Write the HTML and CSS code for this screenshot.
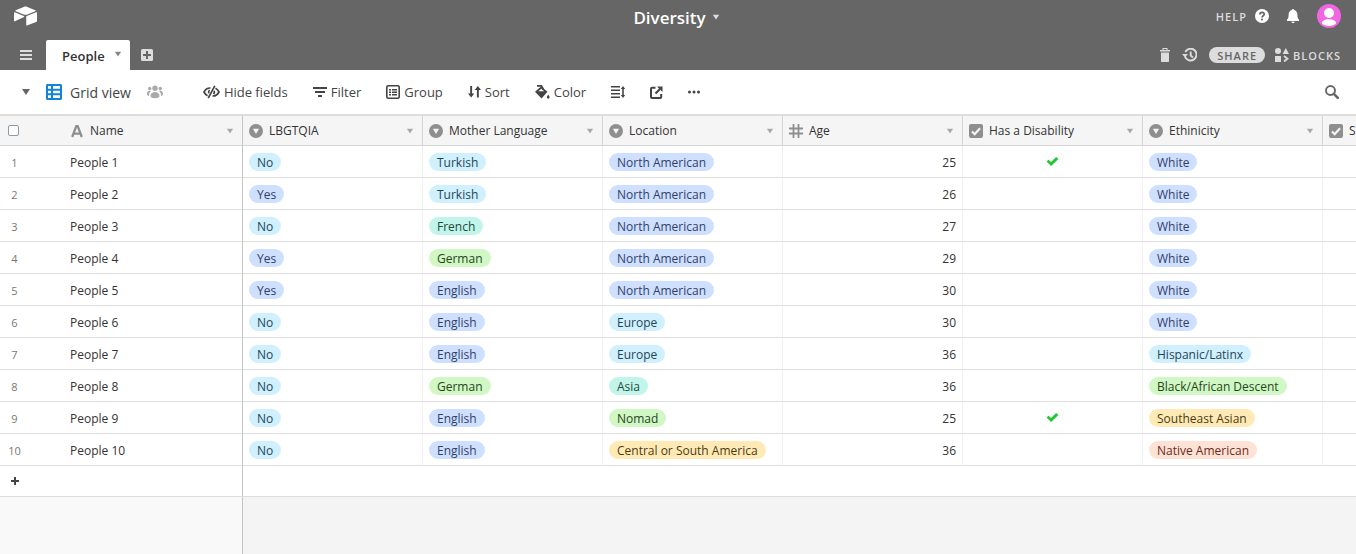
FILE: index.html
```
<!DOCTYPE html>
<html lang="en">
<head>
<meta charset="utf-8">
<title>Diversity: People</title>
<link rel="stylesheet" href="styles.css">
</head>
<body>
<svg class="sprite" aria-hidden="true">
  <symbol id="caret" viewBox="0 0 8 6"><path d="M.800.800h6.400L4 5.600z"/></symbol>
  <symbol id="select" viewBox="0 0 14 14"><path fill-rule="evenodd" d="M7 0a7 7 0 1 0 0 14A7 7 0 0 0 7 0zM3.900 4.800h6.200L7 10z"/></symbol>
  <symbol id="check" viewBox="0 0 14 14"><rect width="14" height="14" rx="2"/><path d="M3 7.500l2.700 2.700L11 4.300" fill="none" stroke="#f5f5f5" stroke-width="2.200"/></symbol>
  <symbol id="text" viewBox="0 0 14 14"><path d="M2.200 13L6.300 2.200h1.400L11.800 13M3.600 9.600h6.800" fill="none" stroke="currentColor" stroke-width="2.300"/></symbol>
  <symbol id="number" viewBox="0 0 14 14"><path d="M4.500 0v14M9.500 0v14M0 4.500h14M0 9.500h14" fill="none" stroke="currentColor" stroke-width="1.800"/></symbol>
</svg>

<header class="topbar">
  <a class="logo" href="#" aria-label="Home">
    <svg width="23" height="20" viewBox="11 10 177 149"><path d="M90 12.400 24 39.700c-3.600 1.500-3.600 6.700 0 8.200l66.300 26.200c5.800 2.300 12.300 2.300 18.200 0l66.200-26.200c3.700-1.500 3.700-6.700 0-8.200l-66-27.300c-6-2.500-12.700-2.500-18.700 0zM105.300 88.500v65.600c0 3.100 3.200 5.200 6.100 4.100l73.800-28.700c1.700-.7 2.800-2.300 2.800-4.100V59.800c0-3.100-3.200-5.200-6.100-4.100l-73.800 28.700c-1.700.7-2.800 2.300-2.800 4.100zM88 91.800l-70.300 33.900c-3 1.400-6.700-.8-6.700-4V60c0-3 3-5 6-3.800l70 27.900c3.600 1.400 3.900 6.400 1 7.700z"/></svg>
  </a>
  <button class="base-name">Diversity <svg width="8" height="6"><use href="#caret"/></svg></button>
  <div class="account">
    <a class="help" href="#">HELP
      <svg width="14" height="14" viewBox="0 0 14 14"><circle cx="7" cy="7" r="7"/><path d="M4.900 5.600c0-3 4.300-2.900 4.300-.4C9.200 6.800 7 6.800 7 8.600" fill="none" stroke="#666" stroke-width="1.700"/><rect x="6.100" y="9.600" width="1.800" height="1.800" fill="#666"/></svg>
    </a>
    <button aria-label="Notifications"><svg width="14" height="14" viewBox="0 0 14 14"><path d="M7 0c.7 0 1 .5 1 1.100C10.200 1.600 11.400 3.400 11.400 6c0 2.500.6 3.800 1.600 4.600V12H1v-1.400C2 9.800 2.600 8.500 2.600 6c0-2.600 1.200-4.400 3.400-4.900C6 .5 6.300 0 7 0zM5.200 12.700h3.600C8.600 13.500 7.900 14 7 14s-1.600-.5-1.800-1.300z"/></svg></button>
    <button aria-label="Account"><svg width="24" height="24" viewBox="0 0 24 24"><circle cx="12" cy="12" r="12" fill="#f266e4"/><circle cx="12" cy="9" r="5"/><path d="M5 19c0-5 14-5 14 0 0 .5-.3.900-.8 1.200C14.500 22.500 9.500 22.500 5.800 20.200 5.300 19.900 5 19.500 5 19z"/></svg></button>
  </div>
</header>

<nav class="tabs">
  <button class="menu" aria-label="Menu"><svg width="12" height="10" viewBox="0 0 12 10"><path d="M0 0h12v2H0zM0 4h12v2H0zM0 8h12v2H0z"/></svg></button>
  <button class="tab">People <svg width="8" height="6"><use href="#caret"/></svg></button>
  <button class="add-tab" aria-label="Add table"><svg width="12" height="12" viewBox="0 0 12 12"><rect width="12" height="12" rx="1.500"/><path d="M6 2v8M2 6h8" stroke="#666" stroke-width="2"/></svg></button>
  <div class="base-actions">
    <button aria-label="Trash"><svg width="10" height="14" viewBox="0 0 10 14"><path d="M2.500 0h5v2H10v1.500H0V2h2.500zM1 4.500h8V13c0 .6-.4 1-1 1H2c-.6 0-1-.4-1-1z"/><path d="M3.500 1.500h3" stroke="#666"/></svg></button>
    <button aria-label="History"><svg width="15" height="14" viewBox="0 0 15 14"><path d="M2.900 8.200A5.900 5.900 0 1 0 3.300 4M8.700 3.500v4l2.300 2" fill="none" stroke="currentColor" stroke-width="1.900"/><path d="M0 6h6L3 9.500z"/></svg></button>
    <button class="share">SHARE</button>
    <button class="blocks"><svg width="14" height="14" viewBox="0 0 14 14"><circle cx="3" cy="3" r="3"/><path d="M10.800 0 14 6H7.600zM0 8h6v6H0z"/><path d="M9 8l3.500 2.800L9 13.500" fill="none" stroke="currentColor" stroke-width="1.800"/></svg>BLOCKS</button>
  </div>
</nav>

<div class="toolbar">
  <button class="view-caret" aria-label="Show views"><svg width="8" height="6" viewBox="0 0 8 6"><path d="M0 0h8L4 6z"/></svg></button>
  <button class="view"><svg class="grid-icon" width="16" height="16" viewBox="0 0 16 16"><path fill-rule="evenodd" d="M1.500 0h13C15.300 0 16 .7 16 1.500v13c0 .8-.7 1.500-1.500 1.500h-13C.7 16 0 15.300 0 14.500v-13C0 .7.700 0 1.500 0zM2 2v2.700h3V2zM7 2v2.700h7V2zM2 6.700v2.600h3V6.700zM7 6.700v2.600h7V6.700zM2 11.300V14h3v-2.700zM7 11.300V14h7v-2.700z"/></svg>Grid view</button>
  <button class="people" aria-label="Collaborators"><svg width="16" height="14" viewBox="0 0 16 14"><circle cx="8" cy="3.200" r="2.700"/><circle cx="2.700" cy="3.500" r="1.700"/><circle cx="13.300" cy="3.500" r="1.700"/><path d="M3.500 11c0-5.500 9-5.500 9 0 0 3-9 3-9 0zM0 9c0-3 2-4 4-3-1.500 1.300-2 2.500-2 5-1.300-.2-2-1-2-2zM16 9c0-3-2-4-4-3 1.500 1.300 2 2.500 2 5 1.300-.2 2-1 2-2z"/></svg></button>
  <div class="tools">
    <button><svg width="17" height="14" viewBox="0 0 17 14"><path d="M7.500 3C4.500 2.800 2.300 4.500 1 7c.9 1.700 2 2.900 3.500 3.700M9.500 11c3 .2 5.200-1.500 6.500-4-.9-1.700-2-2.900-3.500-3.700M6.500 5C5.500 6 5.400 7.200 5.800 8.300M11.200 5.700c.4 1.100.3 2.300-.7 3.300M11.800.8 5.200 13.200" fill="none" stroke="currentColor" stroke-width="1.700"/></svg>Hide fields</button>
    <button><svg width="14" height="12" viewBox="0 0 14 12"><path d="M0 1h14v2H0zM2 5h10v2H2zM5 9h4v2H5z"/></svg>Filter</button>
    <button><svg width="14" height="14" viewBox="0 0 14 14"><rect x=".8" y=".8" width="12.400" height="12.400" rx="1.500" fill="none" stroke="currentColor" stroke-width="1.600"/><path d="M3 4h2v1.500H3zM6 4h5v1.500H6zM3 6.500h2V8H3zM6 6.500h5V8H6zM3 9h2v1.500H3zM6 9h5v1.500H6z"/></svg>Group</button>
    <button><svg width="13" height="12" viewBox="0 0 13 12"><path d="M2.200 0h1.900v7.500h2.200L3.150 11.500 0 7.500h2.200zM8.900 11.500h1.900V4H13L9.850 0 6.700 4h2.200z"/></svg>Sort</button>
    <button><svg width="15" height="14" viewBox="0 0 15 14"><path d="M0 6.800 6 1.500l6.500 5.300L6.500 13.500zM13.200 9.500c.9 1.500 1.400 2 1.400 2.800a1.300 1.300 0 0 1-2.700 0c0-.8.400-1.300 1.300-2.800z"/><path d="M3.400 6.200 6.200 3.800 9.200 6.200z" fill="#fff"/><path d="M2 .9h4.500l2 3.600" fill="none" stroke="currentColor" stroke-width="1.600"/></svg>Color</button>
    <button aria-label="Row height"><svg width="14" height="12" viewBox="0 0 14 12"><path d="M0 0h9v1.500H0zM0 3.500h9V5H0zM0 7h9v1.500H0zM0 10.500h9V12H0zM12 0l2.200 3h-1.400v6h1.400L12 12 9.800 9h1.400V3H9.800z"/></svg></button>
    <button aria-label="Share view"><svg width="13" height="13" viewBox="0 0 13 13"><path d="M5.500 1.800H2c-.6 0-1 .4-1 1V11c0 .6.400 1 1 1h8.200c.6 0 1-.4 1-1V8M5.500 7.500l4.500-4.500" fill="none" stroke="currentColor" stroke-width="2"/><path d="M7 .5h5.500V6z"/></svg></button>
    <button aria-label="More"><svg width="12" height="4" viewBox="0 0 12 4"><circle cx="1.500" cy="2" r="1.500"/><circle cx="6" cy="2" r="1.500"/><circle cx="10.500" cy="2" r="1.500"/></svg></button>
  </div>
  <button class="search" aria-label="Search"><svg width="14" height="14" viewBox="0 0 14 14"><circle cx="5.500" cy="5.500" r="4.500" fill="none" stroke="currentColor" stroke-width="1.900"/><path d="M8.800 8.800l4 4" stroke="currentColor" stroke-width="2.600" stroke-linecap="round"/></svg></button>
</div>

<main class="grid">
<table>
  <colgroup><col class="c-num"><col class="c-name"><col class="c"><col class="c"><col class="c"><col class="c"><col class="c"><col class="c"><col class="c"></colgroup>
  <thead>
    <tr>
      <th class="num"><input type="checkbox" class="select-all" aria-label="Select all rows"></th>
      <th class="name"><div class="field"><svg><use href="#text"/></svg><span>Name</span><button aria-label="Name options"><svg><use href="#caret"/></svg></button></div></th>
      <th><div class="field"><svg><use href="#select"/></svg><span>LBGTQIA</span><button aria-label="LBGTQIA options"><svg><use href="#caret"/></svg></button></div></th>
      <th><div class="field"><svg><use href="#select"/></svg><span>Mother Language</span><button aria-label="Mother Language options"><svg><use href="#caret"/></svg></button></div></th>
      <th><div class="field"><svg><use href="#select"/></svg><span>Location</span><button aria-label="Location options"><svg><use href="#caret"/></svg></button></div></th>
      <th><div class="field"><svg><use href="#number"/></svg><span>Age</span><button aria-label="Age options"><svg><use href="#caret"/></svg></button></div></th>
      <th><div class="field"><svg><use href="#check"/></svg><span>Has a Disability</span><button aria-label="Has a Disability options"><svg><use href="#caret"/></svg></button></div></th>
      <th><div class="field"><svg><use href="#select"/></svg><span>Ethinicity</span><button aria-label="Ethinicity options"><svg><use href="#caret"/></svg></button></div></th>
      <th><div class="field"><svg><use href="#check"/></svg><span>S</span></div></th>
    </tr>
  </thead>
  <tbody>
    <tr><td class="num">1</td><td class="name">People 1</td><td><span class="pill cyan">No</span></td><td><span class="pill cyan">Turkish</span></td><td><span class="pill blue">North American</span></td><td class="age">25</td><td class="tick"><input type="checkbox" aria-label="Has a Disability" checked></td><td><span class="pill blue">White</span></td><td></td></tr>
    <tr><td class="num">2</td><td class="name">People 2</td><td><span class="pill blue">Yes</span></td><td><span class="pill cyan">Turkish</span></td><td><span class="pill blue">North American</span></td><td class="age">26</td><td class="tick"><input type="checkbox" aria-label="Has a Disability"></td><td><span class="pill blue">White</span></td><td></td></tr>
    <tr><td class="num">3</td><td class="name">People 3</td><td><span class="pill cyan">No</span></td><td><span class="pill teal">French</span></td><td><span class="pill blue">North American</span></td><td class="age">27</td><td class="tick"><input type="checkbox" aria-label="Has a Disability"></td><td><span class="pill blue">White</span></td><td></td></tr>
    <tr><td class="num">4</td><td class="name">People 4</td><td><span class="pill blue">Yes</span></td><td><span class="pill green">German</span></td><td><span class="pill blue">North American</span></td><td class="age">29</td><td class="tick"><input type="checkbox" aria-label="Has a Disability"></td><td><span class="pill blue">White</span></td><td></td></tr>
    <tr><td class="num">5</td><td class="name">People 5</td><td><span class="pill blue">Yes</span></td><td><span class="pill blue">English</span></td><td><span class="pill blue">North American</span></td><td class="age">30</td><td class="tick"><input type="checkbox" aria-label="Has a Disability"></td><td><span class="pill blue">White</span></td><td></td></tr>
    <tr><td class="num">6</td><td class="name">People 6</td><td><span class="pill cyan">No</span></td><td><span class="pill blue">English</span></td><td><span class="pill cyan">Europe</span></td><td class="age">30</td><td class="tick"><input type="checkbox" aria-label="Has a Disability"></td><td><span class="pill blue">White</span></td><td></td></tr>
    <tr><td class="num">7</td><td class="name">People 7</td><td><span class="pill cyan">No</span></td><td><span class="pill blue">English</span></td><td><span class="pill cyan">Europe</span></td><td class="age">36</td><td class="tick"><input type="checkbox" aria-label="Has a Disability"></td><td><span class="pill cyan">Hispanic/Latinx</span></td><td></td></tr>
    <tr><td class="num">8</td><td class="name">People 8</td><td><span class="pill cyan">No</span></td><td><span class="pill green">German</span></td><td><span class="pill teal">Asia</span></td><td class="age">36</td><td class="tick"><input type="checkbox" aria-label="Has a Disability"></td><td><span class="pill green">Black/African Descent</span></td><td></td></tr>
    <tr><td class="num">9</td><td class="name">People 9</td><td><span class="pill cyan">No</span></td><td><span class="pill blue">English</span></td><td><span class="pill green">Nomad</span></td><td class="age">25</td><td class="tick"><input type="checkbox" aria-label="Has a Disability" checked></td><td><span class="pill yellow">Southeast Asian</span></td><td></td></tr>
    <tr><td class="num">10</td><td class="name">People 10</td><td><span class="pill cyan">No</span></td><td><span class="pill blue">English</span></td><td><span class="pill yellow">Central or South America</span></td><td class="age">36</td><td class="tick"><input type="checkbox" aria-label="Has a Disability"></td><td><span class="pill red">Native American</span></td><td></td></tr>
  </tbody>
</table>
<div class="add-row"><div class="pinned"><button aria-label="Add row"><svg width="8" height="8" viewBox="0 0 8 8"><path d="M4 0v8M0 4h8" stroke="currentColor" stroke-width="2"/></svg></button></div></div>
<div class="rest"><div class="pinned"></div></div>
</main>
</body>
</html>
```
FILE: styles.css
```
* { box-sizing: border-box; }
body {
  margin: 0;
  height: 100vh;
  display: flex;
  flex-direction: column;
  overflow: hidden;
  font-family: "Open Sans", "Noto Sans", sans-serif;
  font-size: 12px;
  color: #333;
}
svg { display: block; flex: none; fill: currentColor; }
button {
  display: flex;
  align-items: center;
  padding: 0;
  border: 0;
  background: none;
  font: inherit;
  color: inherit;
}
a { color: inherit; text-decoration: none; }
.sprite { position: absolute; width: 0; height: 0; }

.topbar {
  height: 40px;
  flex: none;
  display: grid;
  grid-template-columns: 1fr auto 1fr;
  align-items: start;
  padding: 4px 15px 0 12px;
  background: #666;
  color: #fff;
}
.logo { padding: 2px 0 0 2px; }
.base-name { gap: 6px; font-size: 17px; font-weight: 600; line-height: 28px; }
.base-name svg { color: #ddd; margin-bottom: 3px; }
.account { display: flex; align-items: center; justify-content: flex-end; gap: 17px; }
.help { display: flex; align-items: center; gap: 8px; font-size: 11px; font-weight: 600; letter-spacing: 1px; color: #ddd; }
.help svg { color: #fff; }

.tabs {
  height: 30px;
  flex: none;
  display: flex;
  align-items: center;
  padding: 0 15px 0 20px;
  background: #666;
  color: #ddd;
}
.tab {
  align-self: stretch;
  gap: 9px;
  margin: 0 11px 0 14px;
  padding: 2px 8px 0 16px;
  border-radius: 2px 2px 0 0;
  background: #fff;
  font-size: 13px;
  font-weight: 600;
  color: #333;
}
.tab svg { color: #888; margin-bottom: 4px; }
.base-actions { display: flex; align-items: center; gap: 12px; margin-left: auto; font-size: 11px; font-weight: 600; }
.share { height: 16px; padding: 0 8px; border-radius: 8px; background: #ddd; color: #666; letter-spacing: 1px; }
.blocks { gap: 4px; margin-left: -2px; letter-spacing: 1px; }

.toolbar {
  height: 44px;
  flex: none;
  display: flex;
  align-items: center;
  padding: 0 17px 0 22px;
  font-size: 13px;
  font-weight: 500;
  color: #444;
}
.view-caret { color: #666; }
.view { gap: 8px; margin: 0 16px; font-size: 14px; }
.grid-icon { color: #1283da; }
.people { color: #aaa; }
.tools { display: flex; align-items: center; gap: 25px; margin-left: 40px; }
.tools button { gap: 4px; }
.search { margin-left: auto; color: #666; }

.grid { flex: 1; display: flex; flex-direction: column; overflow: hidden; border-top: 2px solid #ddd; }
table { flex: none; width: 1503px; table-layout: fixed; border-spacing: 0; border-collapse: separate; }
.c-num { width: 64px; }
.c-name { width: 179px; }
.c { width: 180px; }
th, td { height: 32px; padding: 0 6px; text-align: left; font-weight: 400; border-right: 1px solid #f0f0f0; border-bottom: 1px solid #ddd; }
th { height: 30px; background: #f5f5f5; border-color: #d4d4d4; }
th.num, td.num { border-right: 0; }
th.name, td.name { border-right-color: #c4c4c4; }
th.num { padding-left: 8px; }
td.num { padding: 2px 35px 0 0; text-align: center; font-size: 11px; color: #777; }
td.name, td.age { padding-top: 2px; }
.select-all {
  display: block;
  appearance: none;
  width: 11px;
  height: 11px;
  margin: 0;
  border: 1px solid #899aa8;
  border-radius: 2px;
  background: #fff;
}
.field { display: flex; align-items: center; gap: 6px; padding-right: 2px; }
.field svg { width: 14px; height: 14px; color: #8f8f8f; }
.field button { margin-left: auto; }
.field button svg { width: 8px; height: 6px; color: #aaa; }
.pill { display: inline-block; vertical-align: middle; height: 18px; padding: 0 8px; border-radius: 9px; line-height: 19px; white-space: nowrap; }
.blue { background: #cfdfff; color: #303f68; }
.cyan { background: #d0f0fd; color: #1f4558; }
.teal { background: #c2f5e9; color: #1d4a42; }
.green { background: #d1f7c4; color: #26451d; }
.yellow { background: #ffeab6; color: #4b3a14; }
.red { background: #fee2d5; color: #6b2b1c; }
td.age { text-align: right; }
.tick { text-align: center; }
.tick input {
  display: block;
  appearance: none;
  width: 12px;
  height: 10px;
  margin: 0 auto;
  clip-path: polygon(0 50%, 17% 33%, 38% 54%, 80% 6%, 100% 24%, 38% 96%);
}
.tick input:checked { background: #20c933; }

.add-row, .rest { display: flex; }
.add-row { height: 31px; flex: none; border-bottom: 1px solid #ddd; }
.rest { flex: 1; background: #f4f4f4; }
.pinned { width: 243px; display: flex; align-items: center; padding-left: 11px; border-right: 1px solid #c4c4c4; color: #444; }
.rest .pinned { background: #f9f9f9; }
```
